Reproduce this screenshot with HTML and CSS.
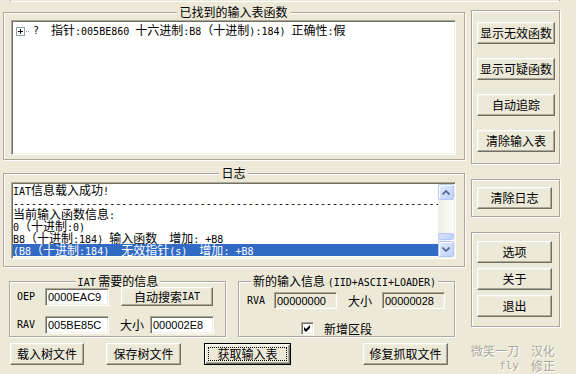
FILE: index.html
```html
<!DOCTYPE html>
<html lang="zh-CN">
<head>
<meta charset="utf-8">
<title>ImportREC</title>
<link rel="stylesheet" href="styles.css">
</head>
<body>
<div class="topedge"></div>
<div class="dlg">
  <div class="left">
    <fieldset class="grp g-funcs">
      <legend class="lg-c">已找到的输入表函数</legend>
      <div class="tree sunken">
        <div class="node">
          <svg class="pbox" width="9" height="9" viewBox="0 0 9 9"><rect x="0.5" y="0.5" width="8" height="8" fill="#fff" stroke="#8F9EA5"/><path d="M2 4.5h5M4.5 2v5" stroke="#000" fill="none"/></svg>
          <svg class="dots" width="6" height="9" viewBox="0 0 6 9"><path d="M1 4.5h1M3 4.5h1" stroke="#A0A0A0" fill="none"/></svg>
          <span class="en q">?</span>
          <span class="ntext">指针<span class="en">:005BE860 </span>十六进制<span class="en">:B8</span>（十进制<span class="en">):184) </span>正确性<span class="en">:</span>假</span>
        </div>
      </div>
    </fieldset>

    <fieldset class="grp g-log">
      <legend class="lg-c">日志</legend>
      <div class="log sunken">
        <div class="lines">
          <div class="ln"><span class="en">IAT</span>信息载入成功<span class="en">!</span></div>
          <div class="ln"><span class="en">--------------------------------------------------------------------------------</span></div>
          <div class="ln">当前输入函数信息<span class="en">:</span></div>
          <div class="ln"><span class="en">0</span>（十进制<span class="en">:0)</span></div>
          <div class="ln"><span class="en">B8</span>（十进制<span class="en">:184) </span>输入函数<span class="en">  </span>增加<span class="en">: +B8</span></div>
          <div class="ln sel"><span class="en">(B8</span>（十进制<span class="en">:184)  </span>无效指针<span class="en">(s)  </span>增加<span class="en">: +B8</span></div>
        </div>
        <div class="vscroll">
          <div class="sarrow"><svg width="8" height="5" viewBox="0 0 8 5"><path d="M0.5 4.5L4 1L7.5 4.5" stroke="#4D6185" stroke-width="1.6" fill="none"/></svg></div>
          <div class="strack"><div class="sthumb"></div></div>
          <div class="sarrow"><svg width="8" height="5" viewBox="0 0 8 5"><path d="M0.5 0.5L4 4L7.5 0.5" stroke="#4D6185" stroke-width="1.6" fill="none"/></svg></div>
        </div>
      </div>
    </fieldset>

    <div class="info-row">
      <fieldset class="grp g-iat">
        <legend class="lg-c"><span class="en">IAT</span> 需要的信息</legend>
        <div class="row">
          <span class="lbl en">OEP</span>
          <input class="inp" type="text" value="0000EAC9" readonly>
          <button class="btn btn-auto" type="button">自动搜索<span class="en">IAT</span></button>
        </div>
        <div class="row r2">
          <span class="lbl en">RAV</span>
          <input class="inp" type="text" value="005BE85C" readonly>
          <span class="lbl2">大小</span>
          <input class="inp" type="text" value="000002E8" readonly>
        </div>
      </fieldset>
      <fieldset class="grp g-new">
        <legend class="lg-l">新的输入信息 <span class="en">(IID+ASCII+LOADER)</span></legend>
        <div class="row n1">
          <span class="lbl3 en">RVA</span>
          <input class="inp ro" type="text" value="00000000" readonly>
          <span class="lbl4">大小</span>
          <input class="inp ro" type="text" value="00000028" readonly>
        </div>
        <div class="row n2">
          <span class="chk"><svg width="9" height="9" viewBox="0 0 9 9"><polygon points="1,3 3,5 7,1 7,4 3,8 1,6" fill="#000"/></svg></span>
          <span class="chk-lbl">新增区段</span>
        </div>
      </fieldset>
    </div>

    <div class="btn-row">
      <button class="btn b1" type="button">载入树文件</button>
      <button class="btn b2" type="button">保存树文件</button>
      <button class="btn b3 default" type="button"><span class="focus">获取输入表</span></button>
      <button class="btn b4" type="button">修复抓取文件</button>
    </div>
  </div>

  <div class="right">
    <div class="grp box box1">
      <button class="btn wide" type="button">显示无效函数</button>
      <button class="btn wide" type="button">显示可疑函数</button>
      <button class="btn wide" type="button">自动追踪</button>
      <button class="btn wide" type="button">清除输入表</button>
    </div>
    <div class="grp box box2">
      <button class="btn narrow" type="button">清除日志</button>
    </div>
    <div class="grp box box3">
      <button class="btn narrow" type="button">选项</button>
      <button class="btn narrow" type="button">关于</button>
      <button class="btn narrow" type="button">退出</button>
    </div>
    <div class="credits">
      <span>微笑一刀</span><span>汉化</span>
      <span class="en fly">fly</span><span>修正</span>
    </div>
  </div>
</div>
</body>
</html>
```

FILE: styles.css
```css
* { box-sizing: border-box; }
html, body { margin: 0; padding: 0; }
body {
  width: 576px;
  height: 374px;
  overflow: hidden;
  background: #ECE9D8;
  color: #000;
  font: 12px/14px "Noto Sans CJK SC", "Liberation Sans", sans-serif;
}
.en { font-family: "DejaVu Sans Mono", monospace; font-size: 10px; }

.topedge {
  height: 2px;
  margin: 0 16px 0 10px;
  border-left: 1px solid #ACA899;
  border-right: 1px solid #ACA899;
  border-bottom: 1px solid #fff;
}

.dlg { display: flex; gap: 6px; padding-left: 3px; }
.left { width: 462px; display: flex; flex-direction: column; }
.right { width: 89px; display: flex; flex-direction: column; }

/* etched group boxes */
.grp {
  margin: 0;
  border: 1px solid #ACA899;
  box-shadow: inset 1px 1px #fff, 1px 1px #fff;
  min-width: 0;
}
fieldset.grp legend {
  padding: 0 2px;
  line-height: 12px;
  height: 12px;
  background: #ECE9D8;
  white-space: nowrap;
}
legend.lg-c { margin: 0 auto; }
legend.lg-l { margin: 0 0 0 4px; }

.sunken {
  border: 1px solid;
  border-color: #ACA899 #fff #fff #ACA899;
  box-shadow: inset 1px 1px #716F64, inset -1px -1px #F1EFE2;
  background: #fff;
}

/* found functions */
.g-funcs { margin-top: 4px; padding: 2px 8px 4px 7px; }
.tree { height: 135px; padding: 1px; }
.node { display: flex; align-items: center; height: 16px; margin-top: 1px; padding-left: 3px; white-space: nowrap; }
.pbox { flex: none; }
.dots { flex: none; }
.q { margin-left: 2px; }
.ntext { margin-left: 12px; white-space: pre; }

/* log */
.g-log { margin-top: 7px; padding: 3px 8px 7px 7px; }
.log { height: 77px; padding: 1px; display: flex; }
.lines { flex: 1; min-width: 0; overflow: hidden; line-height: 12px; }
.ln { height: 12px; white-space: pre; }
.ln.sel { background: #316AC5; color: #fff; }

.vscroll { width: 16px; display: flex; flex-direction: column; background: linear-gradient(to right, #EEEDE5, #FDFDFA); }
.sarrow {
  height: 16px;
  border: 1px solid #B4C8F6;
  border-radius: 2px;
  background: linear-gradient(135deg, #E3EBFD, #BCD0FA);
  box-shadow: inset 1px 1px #fff;
  display: flex; align-items: center; justify-content: center;
}
.strack { flex: 1; display: flex; flex-direction: column; justify-content: flex-end; }
.sthumb {
  height: 7px; margin: 0 0 1px;
  border: 1px solid #B4C8F6;
  border-radius: 2px;
  background: linear-gradient(to right, #D5E1FD, #C1D3FB);
}

/* bottom info groups */
.info-row { display: flex; margin-top: 8px; padding-left: 6px; }
.g-iat { width: 217px; padding: 0 6px 2px 7px; }
.g-new { width: 217px; margin-left: 12px; padding: 0 6px 1px 8px; }
.row { display: flex; align-items: center; height: 19px; white-space: nowrap; }
.r2 { margin-top: 9px; }
.lbl { width: 28px; }
.lbl2 { width: 30px; margin-left: 11px; }
.n1 { height: 17px; margin-top: 5px; }
.n2 { height: 13px; margin-top: 13px; }
.lbl3 { width: 27px; }
.lbl4 { width: 34px; margin-left: 11px; }

.inp {
  width: 64px;
  height: 18px;
  font: 11px/14px "Liberation Sans", sans-serif;
  color: #000;
  border: 1px solid;
  border-color: #ACA899 #fff #fff #ACA899;
  box-shadow: inset 1px 1px #716F64, inset -1px -1px #F1EFE2;
  background: #fff;
  padding: 0 0 0 2px;
  margin: 0;
  outline: none;
}
.n1 .inp { width: 63px; height: 17px; }
.inp.ro { background: #ECE9D8; }

.chk {
  width: 13px; height: 13px;
  margin-left: 54px;
  padding: 1px;
  border: 1px solid;
  border-color: #ACA899 #fff #fff #ACA899;
  box-shadow: inset 1px 1px #716F64, inset -1px -1px #F1EFE2;
  background: #fff;
  display: flex;
}
.chk svg { display: block; }
.chk-lbl { margin-left: 10px; }

/* buttons */
.btn {
  font: inherit;
  color: #000;
  background: #ECE9D8;
  border: 1px solid;
  border-color: #fff #716F64 #716F64 #fff;
  box-shadow: inset -1px -1px #ACA899, inset 1px 1px #F1EFE2;
  padding: 0;
  margin: 0;
  height: 22px;
  display: flex;
  align-items: center;
  justify-content: center;
  white-space: nowrap;
  flex: none;
}
.btn-auto { width: 92px; height: 19px; margin-left: 12px; }

.btn-row { display: flex; margin-top: 6px; padding-left: 7px; }
.b1 { width: 74px; }
.b2 { width: 75px; margin-left: 22px; }
.b3 { width: 87px; margin-left: 23px; }
.b4 { width: 85px; margin-left: 72px; }
.btn.default {
  border: 1px solid #000;
  box-shadow: inset 1px 1px #fff, inset -1px -1px #716F64, inset -2px -2px #ACA899, inset 2px 2px #F1EFE2;
  padding: 3px;
  align-items: stretch;
}
.focus {
  flex: 1;
  border: 1px dotted #000;
  display: flex; align-items: center; justify-content: center;
}

/* right column */
.box { display: flex; flex-direction: column; }
.box1 { margin-top: 8px; height: 154px; padding: 11px 0 0 5px; gap: 14px; }
.box2 { margin-top: 15px; height: 38px; padding: 7px 0 0 5px; }
.box3 { margin-top: 15px; height: 95px; padding: 8px 0 0 5px; gap: 5px; }
.wide { width: 78px; }
.narrow { width: 75px; }

.credits {
  margin-top: 16px;
  display: grid;
  grid-template-columns: 48px 24px;
  column-gap: 12px;
  justify-items: end;
  line-height: 15px;
  color: #ACA899;
  text-shadow: 1px 1px #fff;
}
.fly { font-size: 11px; }
```
